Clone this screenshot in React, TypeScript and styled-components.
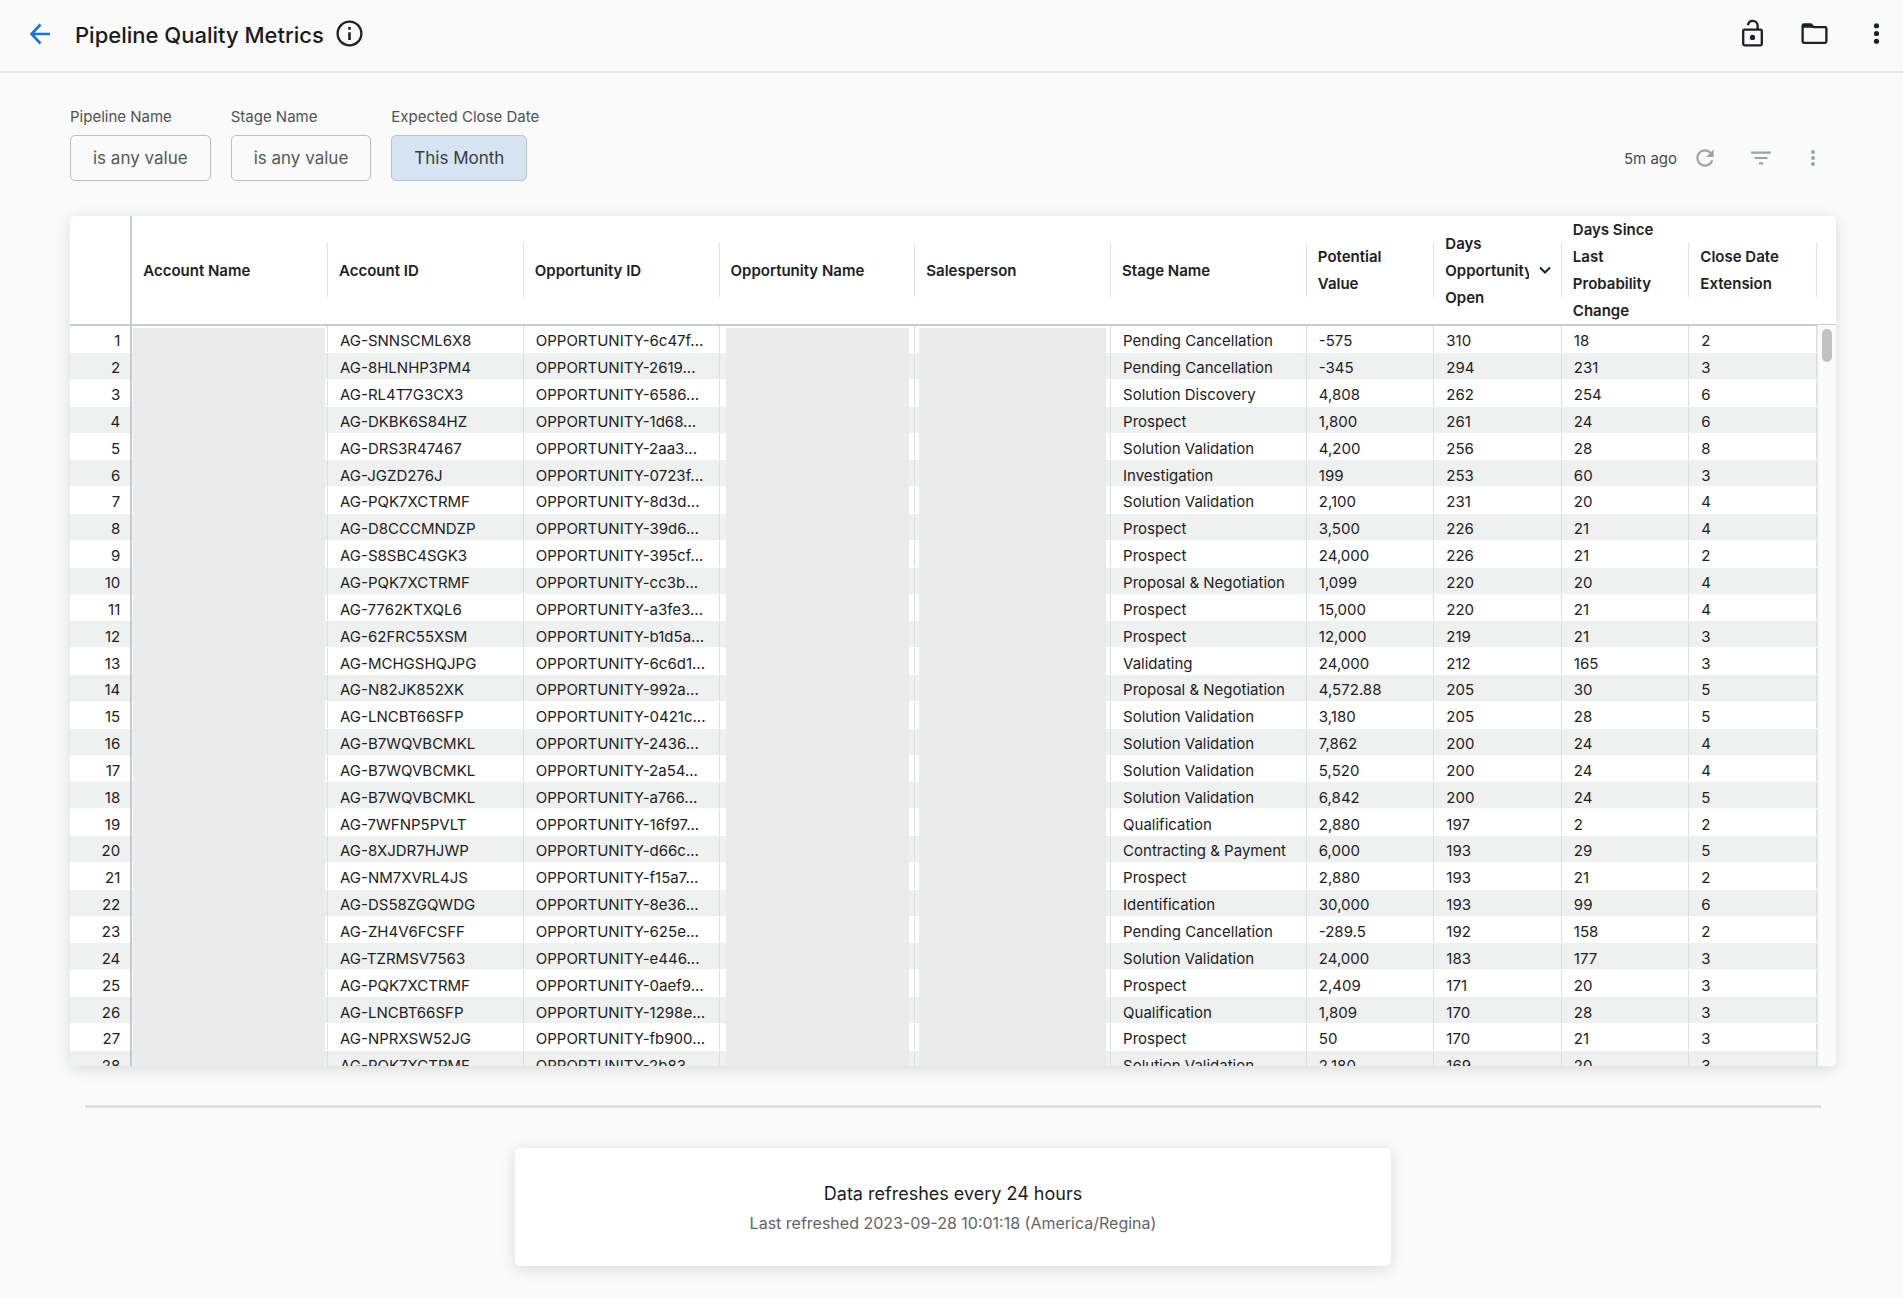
import React from "react";
import styled, { createGlobalStyle, css } from "styled-components";

const GlobalStyle = createGlobalStyle`
  *, *::before, *::after { box-sizing: border-box; }
  body {
    margin: 0;
    background: #fafafa;
    color: #1c2126;
    font-family: Inter, "Liberation Sans", sans-serif;
    font-size: 15px;
  }
  button { font: inherit; color: inherit; cursor: pointer; }
`;

const TopBar = styled.header`
  display: flex;
  align-items: center;
  height: 73px;
  padding: 0 16px 4px 24px;
  border-bottom: 2px solid #e6e6e6;
`;

const IconButton = styled.button<{ $size?: number }>`
  display: flex;
  align-items: center;
  justify-content: center;
  width: ${(p) => p.$size ?? 32}px;
  height: ${(p) => p.$size ?? 32}px;
  padding: 0;
  border: 0;
  background: none;
`;

const Title = styled.h1`
  margin: 2px 10px 0 19px;
  font-size: 22px;
  line-height: 32px;
  font-weight: 500;
  color: #1a1a1c;
`;

const TopActions = styled.div`
  display: flex;
  gap: 30px;
  margin-left: auto;
  margin-right: -5px;
`;

const Content = styled.main`
  padding: 32px 67px 32px 70px;
`;

const Toolbar = styled.div`
  display: flex;
  align-items: flex-end;
  justify-content: space-between;
  margin-bottom: 35px;
`;

const Filters = styled.div`
  display: flex;
  gap: 20px;
`;

const Filter = styled.div`
  display: flex;
  flex-direction: column;
  align-items: flex-start;
  gap: 6px;
  width: min-content;
  white-space: nowrap;
`;

const FilterLabel = styled.span`
  line-height: 24px;
  color: #4c5356;
`;

const FilterChip = styled.button<{ $active?: boolean }>`
  height: 46px;
  padding: 0 22px;
  border: 1px solid #bcbec0;
  border-radius: 5px;
  background: ${(p) => (p.$active ? "#d7e4f2" : "transparent")};
  color: ${(p) => (p.$active ? "#343c42" : "#54585b")};
  font-size: 17px;
`;

const Status = styled.div`
  display: flex;
  align-items: center;
  height: 46px;
  gap: 24px;
  padding-right: 11px;
  color: #9ca3a4;
`;

const Age = styled.span`
  display: flex;
  align-items: center;
  gap: 12px;
  color: #454d50;
`;

const Card = styled.section`
  position: relative;
  border-radius: 5px;
  background: #fff;
  box-shadow: 0 3px 16px rgba(0, 0, 0, 0.13);
`;

const Scroller = styled.div`
  height: 850px;
  overflow: auto;
  scrollbar-width: none;
  border-radius: 5px;
`;

const Grid = styled.table`
  width: 100%;
  height: 862px;
  table-layout: fixed;
  border-collapse: separate;
  border-spacing: 0;
`;

const Col = styled.col<{ $width: number }>`
  width: ${(p) => p.$width}px;
`;

const HeadCell = styled.th<{ $kind?: "index" | "end" }>`
  position: sticky;
  top: 0;
  height: 109px;
  padding: 0 11px;
  border-bottom: 2px solid #c5cacf;
  background: linear-gradient(#dde2e5, #dde2e5) right center / 1px 54px no-repeat #fff;
  text-align: left;
  font-weight: 600;
  line-height: 27px;
  ${(p) => p.$kind === "index" && css`
    border-right: 2px solid #c5cacf;
    background: #fff;
  `}
  ${(p) => p.$kind === "end" && css`
    padding: 0;
    background: #fff;
  `}
`;

const SortButton = styled.button`
  display: flex;
  align-items: center;
  gap: 10px;
  width: 100%;
  padding: 0;
  border: 0;
  background: none;
  text-align: left;
  line-height: 27px;
`;

const SortLabel = styled.span`
  flex: 1;
  min-width: 0;
  overflow: hidden;
`;

const Row = styled.tr`
  &:nth-child(even) {
    background: linear-gradient(to top, #fbfbfb 1px, #eff1f1 1px);
  }
`;

const line = "linear-gradient(#dcdfe0, #dcdfe0) right top / 1px calc(100% - 1px) no-repeat";

const Cell = styled.td`
  padding: 3px 0 0 12px;
  background: ${line};
  line-height: 23px;
  white-space: nowrap;
  overflow: hidden;
`;

const IndexCell = styled.td`
  padding: 3px 10px 0 0;
  border-right: 2px solid #c5cacf;
  line-height: 23px;
  text-align: right;
`;

const HiddenCell = styled.td<{ $left: number; $right: number }>`
  padding: 0 ${(p) => p.$right}px 0 ${(p) => p.$left}px;
  background: ${line}, linear-gradient(#ebebeb, #ebebeb) content-box;
  ${Row}:first-child & { padding-top: 2px; }
`;

const ScrollTrack = styled.div`
  position: absolute;
  top: 109px;
  right: 0;
  bottom: 0;
  width: 19px;
  padding: 4px;
  border-left: 1px solid #e8e8e8;
  border-bottom-right-radius: 5px;
  background: #fafafa;
`;

const ScrollThumb = styled.div`
  width: 10px;
  height: 33px;
  border-radius: 5px;
  background: #c1c1c1;
`;

const Divider = styled.hr`
  height: 3px;
  margin: 39px 15px 40px;
  border: 0;
  background: #e0e0e0;
`;

const Notice = styled(Card)`
  max-width: 876px;
  margin: 0 auto;
  padding: 31px 24px 29px;
  text-align: center;
`;

const NoticeTitle = styled.p`
  margin: 0;
  font-size: 18px;
  line-height: 30px;
  color: #1c1c1e;
`;

const NoticeText = styled.p`
  margin: 0;
  font-size: 16px;
  line-height: 28px;
  color: #646568;
`;

const Svg = ({ size, children }: { size: number; children: React.ReactNode }) => (
  <svg width={size} height={size} viewBox="0 0 24 24" fill="none" stroke="currentColor" strokeWidth={2} aria-hidden="true">
    {children}
  </svg>
);

const Dots = ({ size, color = "currentColor" }: { size: number; color?: string }) => (
  <Svg size={size}>
    <g fill={color} stroke="none">
      <circle cx="12" cy="6" r="2" />
      <circle cx="12" cy="12" r="2" />
      <circle cx="12" cy="18" r="2" />
    </g>
  </Svg>
);

const columns = [
  { name: "Account Name", width: 195 },
  { name: "Account ID", width: 195 },
  { name: "Opportunity ID", width: 195 },
  { name: "Opportunity Name", width: 195 },
  { name: "Salesperson", width: 195 },
  { name: "Stage Name", width: 195 },
  { name: "Potential Value", width: 127 },
  { name: "Days Opportunity Open", width: 127, sorted: true },
  { name: "Days Since Last Probability Change", width: 127 },
  { name: "Close Date Extension", width: 127 },
];

const rows = `
AG-SNNSCML6X8|6c47f|Pending Cancellation|-575|310|18|2
AG-8HLNHP3PM4|2619|Pending Cancellation|-345|294|231|3
AG-RL4T7G3CX3|6586|Solution Discovery|4,808|262|254|6
AG-DKBK6S84HZ|1d68|Prospect|1,800|261|24|6
AG-DRS3R47467|2aa3|Solution Validation|4,200|256|28|8
AG-JGZD276J|0723f|Investigation|199|253|60|3
AG-PQK7XCTRMF|8d3d|Solution Validation|2,100|231|20|4
AG-D8CCCMNDZP|39d6|Prospect|3,500|226|21|4
AG-S8SBC4SGK3|395cf|Prospect|24,000|226|21|2
AG-PQK7XCTRMF|cc3b|Proposal & Negotiation|1,099|220|20|4
AG-7762KTXQL6|a3fe3|Prospect|15,000|220|21|4
AG-62FRC55XSM|b1d5a|Prospect|12,000|219|21|3
AG-MCHGSHQJPG|6c6d1|Validating|24,000|212|165|3
AG-N82JK852XK|992a|Proposal & Negotiation|4,572.88|205|30|5
AG-LNCBT66SFP|0421c|Solution Validation|3,180|205|28|5
AG-B7WQVBCMKL|2436|Solution Validation|7,862|200|24|4
AG-B7WQVBCMKL|2a54|Solution Validation|5,520|200|24|4
AG-B7WQVBCMKL|a766|Solution Validation|6,842|200|24|5
AG-7WFNP5PVLT|16f97|Qualification|2,880|197|2|2
AG-8XJDR7HJWP|d66c|Contracting & Payment|6,000|193|29|5
AG-NM7XVRL4JS|f15a7|Prospect|2,880|193|21|2
AG-DS58ZGQWDG|8e36|Identification|30,000|193|99|6
AG-ZH4V6FCSFF|625e|Pending Cancellation|-289.5|192|158|2
AG-TZRMSV7563|e446|Solution Validation|24,000|183|177|3
AG-PQK7XCTRMF|0aef9|Prospect|2,409|171|20|3
AG-LNCBT66SFP|1298e|Qualification|1,809|170|28|3
AG-NPRXSW52JG|fb900|Prospect|50|170|21|3
AG-PQK7XCTRMF|2b83|Solution Validation|2,180|169|20|3
`.trim().split("\n").map((r) => r.split("|"));

export default function App() {
  return (
    <>
      <GlobalStyle />
      <TopBar>
        <IconButton aria-label="Back">
          <svg width="24" height="24" viewBox="0 0 24 24" fill="none" stroke="#1a73d9" strokeWidth="2.6" aria-hidden="true">
            <path d="M22 12H4M12.5 2.5 3.5 12l9 9.5" />
          </svg>
        </IconButton>
        <Title>Pipeline Quality Metrics</Title>
        <IconButton aria-label="About this dashboard">
          <Svg size={31}>
            <circle cx="12" cy="12" r="9.2" strokeWidth="1.8" />
            <path d="M12 11v6M12 7v2" />
          </Svg>
        </IconButton>
        <TopActions>
          <IconButton aria-label="Unlock">
            <Svg size={31}>
              <rect x="4.8" y="9" width="14.4" height="12.2" rx="1" strokeWidth="1.8" />
              <path d="M8.4 5.6c.4-2 1.7-3.4 3.7-3.4 2.200 0 3.900 1.700 3.900 3.900V9" strokeWidth="1.8" />
              <circle cx="12" cy="15" r="2" fill="currentColor" stroke="none" />
            </Svg>
          </IconButton>
          <IconButton aria-label="Folder">
            <Svg size={31}>
              <path d="M3.800 5h5.400l2 2h9c.6 0 1 .4 1 1v10.200c0 .6-.4 1-1 1H3.800c-.6 0-1-.4-1-1V6c0-.6.4-1 1-1Z" strokeWidth="1.8" />
              <path d="M3 5h6.200l2 2.600H3Z" fill="currentColor" stroke="none" />
            </Svg>
          </IconButton>
          <IconButton aria-label="Dashboard actions">
            <Dots size={31} />
          </IconButton>
        </TopActions>
      </TopBar>

      <Content>
        <Toolbar>
          <Filters>
            <Filter>
              <FilterLabel id="f1">Pipeline Name</FilterLabel>
              <FilterChip aria-describedby="f1">is any value</FilterChip>
            </Filter>
            <Filter>
              <FilterLabel id="f2">Stage Name</FilterLabel>
              <FilterChip aria-describedby="f2">is any value</FilterChip>
            </Filter>
            <Filter>
              <FilterLabel id="f3">Expected Close Date</FilterLabel>
              <FilterChip $active aria-describedby="f3">This Month</FilterChip>
            </Filter>
          </Filters>
          <Status>
            <Age>
              5m ago
              <IconButton aria-label="Refresh">
                <svg width="26" height="26" viewBox="0 0 24 24" fill="#9ca3a4" aria-hidden="true">
                  <path d="M17.650 6.350C16.200 4.900 14.210 4 12 4c-4.420 0-7.990 3.580-7.990 8s3.570 8 7.990 8c3.730 0 6.840-2.550 7.730-6h-2.080c-.82 2.330-3.040 4-5.650 4-3.310 0-6-2.690-6-6s2.690-6 6-6c1.660 0 3.140.69 4.220 1.780L13 11h7V4l-2.350 2.350z" />
                </svg>
              </IconButton>
            </Age>
            <IconButton aria-label="Filters">
              <svg width="26" height="26" viewBox="0 0 24 24" fill="#9ca3a4" aria-hidden="true">
                <path d="M10 18h4v-2h-4v2zM3 6v2h18V6H3zm3 7h12v-2H6v2z" />
              </svg>
            </IconButton>
            <IconButton $size={24} aria-label="Tile actions">
              <Dots size={26} color="#9ca3a4" />
            </IconButton>
          </Status>
        </Toolbar>

        <Card>
          <Scroller>
            <Grid>
              <colgroup>
                <Col $width={62} />
                {columns.map((c) => (
                  <Col key={c.name} $width={c.width} />
                ))}
                <Col $width={19} />
              </colgroup>
              <thead>
                <tr>
                  <HeadCell $kind="index" />
                  {columns.map((c) => (
                    <HeadCell key={c.name} scope="col">
                      {c.sorted ? (
                        <SortButton>
                          <SortLabel>{c.name}</SortLabel>
                          <svg width="12" height="12" viewBox="0 0 12 12" fill="none" stroke="currentColor" strokeWidth="2" aria-hidden="true">
                            <path d="m1 3.500 5 5 5-5" />
                          </svg>
                        </SortButton>
                      ) : (
                        c.name
                      )}
                    </HeadCell>
                  ))}
                  <HeadCell $kind="end" />
                </tr>
              </thead>
              <tbody>
                {rows.map(([account, opportunity, stage, ...values], i) => (
                  <Row key={i}>
                    <IndexCell>{i + 1}</IndexCell>
                    <HiddenCell $left={1} $right={3} />
                    <Cell>{account}</Cell>
                    <Cell>OPPORTUNITY-{opportunity}...</Cell>
                    <HiddenCell $left={6} $right={6} />
                    <HiddenCell $left={4} $right={5} />
                    <Cell>{stage}</Cell>
                    {values.map((v, k) => (
                      <Cell key={k}>{v}</Cell>
                    ))}
                    <td />
                  </Row>
                ))}
              </tbody>
            </Grid>
          </Scroller>
          <ScrollTrack>
            <ScrollThumb />
          </ScrollTrack>
        </Card>

        <Divider />

        <Notice>
          <NoticeTitle>Data refreshes every 24 hours</NoticeTitle>
          <NoticeText>Last refreshed 2023-09-28 10:01:18 (America/Regina)</NoticeText>
        </Notice>
      </Content>
    </>
  );
}
